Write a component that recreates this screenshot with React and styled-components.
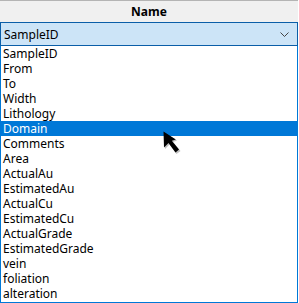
import styled, { createGlobalStyle } from "styled-components";

const fields = [
    "SampleID", "From", "To", "Width", "Lithology", "Domain", "Comments", "Area",
    "ActualAu", "EstimatedAu", "ActualCu", "EstimatedCu", "ActualGrade",
    "EstimatedGrade", "vein", "foliation", "alteration",
];

export default function App() {
    return (
        <>
            <Global />
            <Panel>
                <Header>Name</Header>
                <Combo>
                    <span>SampleID</span>
                    <svg width="9" height="5" viewBox="0 0 9 5">
                        <path d="M0.5 0.5 L4.5 4.5 L8.5 0.5" fill="none" stroke="#444" strokeWidth="1" />
                    </svg>
                </Combo>
                <List>
                    {fields.map((f) => <Item key={f} selected={f === "Domain"}>{f}</Item>)}
                </List>
                <Pointer width="20" height="25" viewBox="0 0 20 25">
                    <polygon points="1.5,1.5 2,18 6.5,13.5 13.5,23 17.5,20 10,11 14,9.5" fill="rgba(0,0,0,0.25)" />
                    <polygon points="0.5,0.5 1,16.5 5.5,12 12.5,21.5 16,18.5 8.8,9.7 12.8,8.5" fill="#000" />
                </Pointer>
            </Panel>
        </>
    );
}

const Global = createGlobalStyle`
    body {
        margin: 0;
        background: #ffffff;
        font-family: 'Noto Sans', 'Open Sans', sans-serif;
        font-size: 12px;
    }
`

const Panel = styled.div`
    position: relative;
    width: 298px;
    display: flex;
    flex-direction: column;
`

const Header = styled.div`
    height: 21px;
    border-top: 1px solid #b4b4b4;
    background-color: #f0f0f0;
    display: flex;
    align-items: center;
    justify-content: center;
    font-weight: 700;
    color: #000000;
`

const Combo = styled.div`
    height: 22px;
    border: 1px solid #0a5ea8;
    background-color: #cce4f7;
    display: flex;
    align-items: center;
    justify-content: space-between;
    padding: 0 8px 0 3px;
    color: #000000;
    svg {
        margin-top: 1px;
    }
`

const List = styled.div`
    border: 1px solid #0078d7;
    border-top: none;
    display: flex;
    flex-direction: column;
    padding-bottom: 1px;
`

const Item = styled.div`
    height: 15px;
    line-height: 15px;
    padding-left: 2px;
    color: ${(p) => (p.selected ? "#ffffff" : "#000000")};
    background-color: ${(p) => (p.selected ? "#0078d7" : "transparent")};
`

const Pointer = styled.svg`
    position: absolute;
    left: 163px;
    top: 131px;
`
